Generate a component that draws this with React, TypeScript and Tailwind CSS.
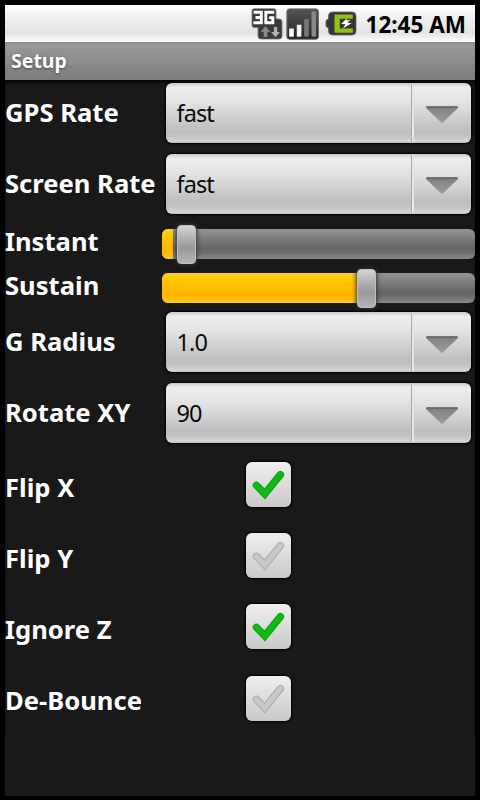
import clsx from 'clsx'

const spinnerBg =
  'bg-[linear-gradient(180deg,#c9c9c9_0%,#eeedee_7%,#e6e5e6_28%,#d3d2d3_55%,#bfbdbf_80%,#c3c1c3_88%,#d6d6d6_97%,#b9b9b9_100%)]'

function NetworkIcon() {
  return (
    <svg width="32" height="34" viewBox="0 0 32 34" className="shrink-0">
      <path
        d="M3 .8h20q2 0 2 2v8.200h3q3 0 3 3V28q0 3-3 3H10q-3 0-3-3v-8.500H3q-2 0-2-2V2.800q0-2 2-2z"
        fill="#3a3a3a"
        stroke="#777"
        strokeWidth=".8"
      />
      <g fill="none" stroke="#fff" strokeWidth="2.900">
        <path d="M2.600 4.200h7.700v10.600H2.400M4.500 9.500h6" />
        <path d="M23.200 4.200h-8.400v10.600h7V9.800h-3.600" />
      </g>
      <path d="M14.500 18.300l4.800 5.500h-3v5.200h-3.600v-5.200h-3z" fill="#8b8b8b" />
      <path d="M24.500 29.300l-4.500-5.400h2.900v-5h3.300v5H29z" fill="#b0b0b0" />
    </svg>
  )
}

function SignalIcon() {
  return (
    <svg width="34" height="34" viewBox="0 0 34 34" className="shrink-0">
      <defs>
        <linearGradient id="signal" x1="0" y1="0" x2="0" y2="1">
          <stop offset="0" stopColor="#555" />
          <stop offset="1" stopColor="#242424" />
        </linearGradient>
      </defs>
      <rect x=".9" y=".9" width="31.500" height="30.300" rx="2.500" fill="url(#signal)" stroke="#696969" />
      <rect x="3.200" y="20.500" width="4.600" height="8.200" fill="#fff" />
      <rect x="10.800" y="16.800" width="4.600" height="11.900" fill="#f4f4f4" />
      <rect x="18.200" y="11" width="4.600" height="17.700" rx="1" fill="#777" />
      <rect x="25.500" y="3.500" width="4.600" height="25.200" rx="1" fill="#888" />
    </svg>
  )
}

function BatteryIcon() {
  return (
    <svg width="32" height="26" viewBox="0 0 32 26" className="shrink-0">
      <path
        d="M7.500 1H27q4 0 4 4v15q0 4-4 4H7.500q-4 0-4-4v-3Q1 16.500 1 14.500v-4Q1 8.500 3.500 8V5q0-4 4-4z"
        fill="#353535"
        stroke="#666"
        strokeWidth=".8"
      />
      <path d="M9.500 3.500h18.300v4.200H14.800v9.800h13v4.200H9.500z" fill="#8fc31c" />
      <path d="M22 7.200l-6 5.700 4.500.3-2.700 4.300 8.700-5.200-4.200-.5 3.200-3.100-4 .9z" fill="#fff" />
    </svg>
  )
}

function Label({ children }: { children: string }) {
  return (
    <div className="w-[157px] shrink-0 pt-px text-[25.600px] leading-9 font-bold whitespace-nowrap text-white">{children}</div>
  )
}

function SpinnerRow({ label, value }: { label: string; value: string }) {
  return (
    <div className="flex h-[71.200px] items-start">
      <div className="pt-[13.500px]">
        <Label>{label}</Label>
      </div>
      <div
        className={clsx(
          'mt-[2.800px] ml-1 flex h-[60px] w-[305px] items-center rounded-[6px] shadow-[0_0_2px_1px_#000]',
          spinnerBg,
        )}
      >
        <span className="flex-1 pl-[10.500px] text-[23.500px] leading-8 tracking-[-0.900px] text-[#0b0b0b]">{value}</span>
        <span className="h-[58px] w-[2.500px] border-l border-[#aaa] bg-[#e6e6e6]" />
        <span className="flex w-[57.500px] justify-center pt-[5px] pr-px">
          <svg width="34" height="20" viewBox="0 0 34 20">
            <defs>
              <linearGradient id="arrow" x1="0" y1="0" x2="0" y2="1">
                <stop offset="0" stopColor="#6e6e6e" />
                <stop offset=".15" stopColor="#858585" />
                <stop offset="1" stopColor="#9c9c9c" />
              </linearGradient>
            </defs>
            <path d="M1.500 1.500h31q1 1 0 2L17.800 17.600q-.8.8-1.600 0L1.500 3.500q-1-1 0-2z" fill="url(#arrow)" />
            <path d="M1.500 2h31" stroke="#666" strokeWidth="1.500" />
          </svg>
        </span>
      </div>
    </div>
  )
}

function SliderRow({ label, fill, thumb }: { label: string; fill: number; thumb: number }) {
  return (
    <div className="flex h-[43.500px] items-center">
      <div className="pb-[5px]">
        <Label>{label}</Label>
      </div>
      <div className="relative h-[30px] w-[313px]">
        <div className="h-full overflow-hidden rounded-[6px] bg-[linear-gradient(180deg,#969696_0%,#808180_25%,#636563_65%,#6d6e6d_80%,#8a8b8a_100%)]">
          <div
            className="h-full bg-[linear-gradient(180deg,#ffd21c_0%,#ffc800_20%,#ffb700_65%,#ffb800_80%,#ffca18_100%)]"
            style={{ width: fill }}
          />
        </div>
        <div
          className="absolute -top-[4px] h-[39px] w-[19px] rounded-[4px] border border-[#c0c0c0] bg-[linear-gradient(180deg,#d4d4d4_0%,#bebebe_20%,#989898_60%,#b5b5b5_100%)] shadow-[0_0_4px_1px_#333]"
          style={{ left: thumb }}
        />
      </div>
    </div>
  )
}

function CheckRow({ label, checked }: { label: string; checked?: boolean }) {
  return (
    <div className="flex h-[71.200px] items-center">
      <Label>{label}</Label>
      <div className="mb-[5.500px] ml-[84px] flex h-[45px] w-[44.500px] items-center justify-center rounded-[6px] bg-[linear-gradient(180deg,#eeeeee_0%,#e2e2e2_35%,#c9c9c9_100%)] shadow-[0_0_2px_1px_#000]">
        <svg width="45" height="45" viewBox="0 0 45 45" fill="none" strokeLinejoin="miter" strokeLinecap="round">
          <path d="M10.500 23.300l8.500 8.700L34.800 12.500" stroke={checked ? '#159a18' : '#ababab'} strokeWidth="7.400" />
          <path d="M10.500 23.300l8.500 8.700L34.800 12.500" stroke={checked ? '#0cbc10' : '#c8c8c8'} strokeWidth="5.400" />
        </svg>
      </div>
    </div>
  )
}

export default function App() {
  return (
    <div className="h-[800px] w-[480px] overflow-hidden bg-black p-[5px] font-['Noto_Sans',sans-serif]">
      <div className="flex h-[791px] flex-col bg-[#191919]">
        <header className="flex h-[37px] shrink-0 items-start justify-end bg-[linear-gradient(180deg,#ffffff_0%,#f4f4f4_25%,#e2e2e2_75%,#f4f4f4_92%,#ffffff_100%)] pr-[9px]">
          <div className="flex pt-[2.500px]">
            <NetworkIcon />
            <div className="ml-[3px]">
              <SignalIcon />
            </div>
            <div className="mt-[3px] ml-[5px]">
              <BatteryIcon />
            </div>
          </div>
          <div className="ml-[8.500px] pt-[4px] text-[22.500px] leading-8 font-bold text-black">12:45 AM</div>
        </header>
        <div className="flex h-[38px] shrink-0 items-center bg-[linear-gradient(180deg,#8c8c8c_0%,#999999_8%,#7c7c7c_100%)] pl-[6px] text-[19.500px] leading-8 font-bold text-white [text-shadow:0_1px_3px_#444]">
          Setup
        </div>
        <main className="shadow-[inset_0_4px_4px_-2px_#000]">
          <SpinnerRow label="GPS Rate" value="fast" />
          <SpinnerRow label="Screen Rate" value="fast" />
          <SliderRow label="Instant" fill={11} thumb={15} />
          <SliderRow label="Sustain" fill={204} thumb={194.5} />
          <SpinnerRow label="G Radius" value="1.0" />
          <SpinnerRow label="Rotate XY" value="90" />
          <CheckRow label="Flip X" checked />
          <CheckRow label="Flip Y" />
          <CheckRow label="Ignore Z" checked />
          <CheckRow label="De-Bounce" />
        </main>
      </div>
    </div>
  )
}
